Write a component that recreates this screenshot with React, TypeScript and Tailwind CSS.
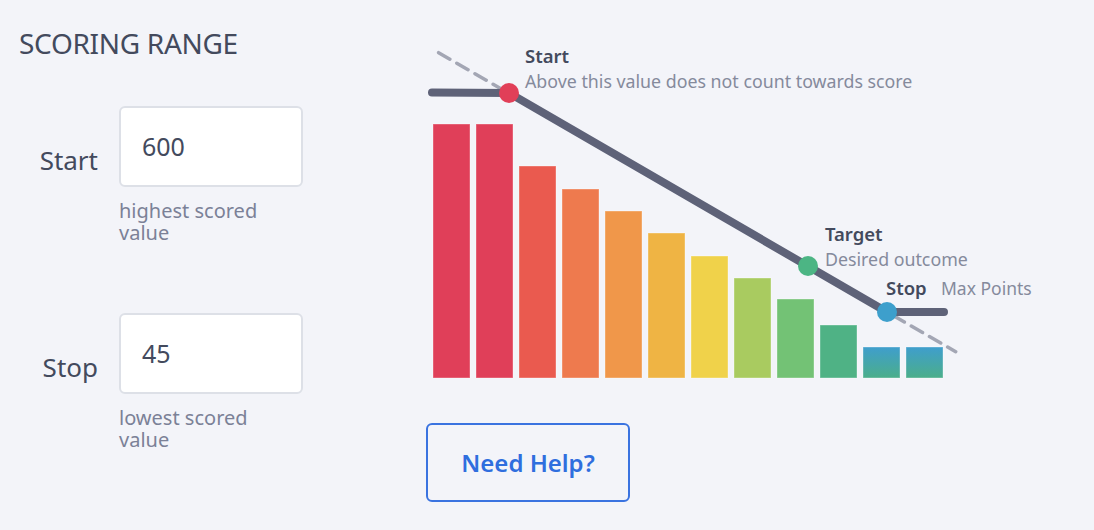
import React from "react";

const bars = [
  { top: 124, color: "#e03f59" },
  { top: 124, color: "#e03f59" },
  { top: 166, color: "#ea5a4f" },
  { top: 189, color: "#ee7a4e" },
  { top: 211, color: "#f0974a" },
  { top: 233, color: "#efb444" },
  { top: 256, color: "#f0d24a" },
  { top: 278, color: "#a9cb60" },
  { top: 299, color: "#73c275" },
  { top: 325, color: "#4fb285" },
  { top: 347, color: "url(#blueGreen)" },
  { top: 347, color: "url(#blueGreen)" },
];

function Chart() {
  return (
    <svg width="684" height="370" viewBox="410 30 684 370" className="block">
      <defs>
        <linearGradient id="blueGreen" x1="0" y1="0" x2="0" y2="1">
          <stop offset="0" stopColor="#3f9ecd" />
          <stop offset="1" stopColor="#4bae8a" />
        </linearGradient>
      </defs>
      {bars.map((b, i) => (
        <rect
          key={i}
          x={433 + i * 43}
          y={b.top}
          width={37}
          height={378 - b.top}
          fill={b.color}
          stroke="#ffffff"
          strokeOpacity={0.35}
          strokeWidth={1}
        />
      ))}
      <line
        x1={438.6}
        y1={52.7}
        x2={955.7}
        y2={351.7}
        stroke="#a3a6b4"
        strokeWidth={3.5}
        strokeDasharray="13 8"
        strokeLinecap="round"
      />
      <polyline
        points="432,92.5 509,93 887,312 944,312"
        fill="none"
        stroke="#5e6278"
        strokeWidth={8}
        strokeLinecap="round"
        strokeLinejoin="round"
      />
      <circle cx={509} cy={93} r={10} fill="#e13f58" />
      <circle cx={808} cy={266} r={10} fill="#4cb584" />
      <circle cx={887} cy={312} r={10} fill="#3d9fcc" />
      <g fontFamily="'Noto Sans', sans-serif">
        <text x={525} y={62.5} fontSize={18.5} fontWeight={600} fill="#434a5d">Start</text>
        <text x={525} y={87.5} fontSize={17.8} fill="#858a9c">Above this value does not count towards score</text>
        <text x={825} y={241} fontSize={18.5} fontWeight={600} fill="#434a5d">Target</text>
        <text x={825} y={265.5} fontSize={17.8} fill="#858a9c">Desired outcome</text>
        <text x={886} y={295} fontSize={18.5} fontWeight={600} fill="#434a5d">Stop</text>
        <text x={941} y={295} fontSize={17.5} fill="#858a9c">Max Points</text>
      </g>
    </svg>
  );
}

function Field({ label, value, help1, help2 }: { label: string; value: string; help1: string; help2: string }) {
  return (
    <div className="flex">
      <div className="w-[119px] pr-[21px] pt-[38px] text-right text-[26px] leading-[32px] text-[#434a5d]">{label}</div>
      <div className="flex flex-col">
        <div className="w-[184px] h-[81px] bg-white border-2 border-[#dde0e7] rounded-[6px] pl-[21px] pt-[22px] text-[25px] leading-[32px] text-[#434a5d]">
          {value}
        </div>
        <div className="mt-[13px] text-[20px] leading-[22px] text-[#7b8197]">
          <div className="h-[22px]">{help1}</div>
          <div className="h-[22px]">{help2}</div>
        </div>
      </div>
    </div>
  );
}

export default function App() {
  return (
    <div
      className="w-[1094px] h-[530px] bg-[#f3f4f9] flex overflow-hidden"
      style={{ fontFamily: "'Noto Sans', sans-serif" }}
    >
      <div className="w-[410px] pl-[19px] pt-[26px] flex flex-col">
        <div className="text-[28px] leading-[34px] text-[#434a5d] tracking-[-0.3px]">SCORING RANGE</div>
        <div className="mt-[46px] -ml-[19px]">
          <Field label="Start" value="600" help1="highest scored" help2="value" />
        </div>
        <div className="mt-[69px] -ml-[19px]">
          <Field label="Stop" value="45" help1="lowest scored" help2="value" />
        </div>
      </div>
      <div className="flex flex-col pt-[30px]">
        <Chart />
        <button className="ml-[16px] mt-[23px] w-[204px] h-[79px] border-2 border-[#3a73e0] rounded-[6px] text-[24px] font-semibold text-[#2f6ede] bg-transparent">
          Need Help?
        </button>
      </div>
    </div>
  );
}
